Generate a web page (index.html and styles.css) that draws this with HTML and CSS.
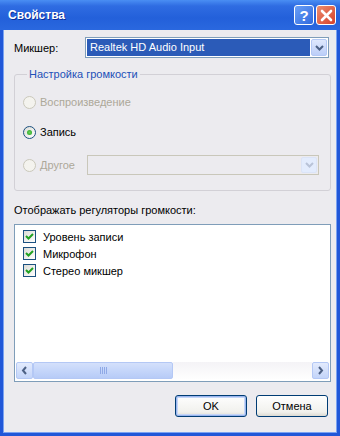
FILE: index.html
```html
<!DOCTYPE html>
<html>
<head>
    <title>Свойства</title>
    <link rel="stylesheet" href="styles.css">
</head>
<body>
    <div class="window">
        <div class="titlebar">
            <span class="title">Свойства</span>
            <span class="tbtn help">?</span>
            <span class="tbtn close">
                <svg width="13" height="13" viewBox="0 0 13 13"><path d="M2 2 L11 11 M11 2 L2 11" stroke="#fff" stroke-width="2.6" stroke-linecap="round"/></svg>
            </span>
        </div>
        <div class="content">
            <div class="mixer-row">
                <label class="mixer-label">Микшер:</label>
                <div class="combo">
                    <div class="combo-value selected">Realtek HD Audio Input</div>
                    <div class="combo-btn">
                        <svg width="9" height="6" viewBox="0 0 9 6"><path d="M1 1 L4.5 4.5 L8 1" fill="none" stroke="#4d6185" stroke-width="2"/></svg>
                    </div>
                </div>
            </div>

            <fieldset class="group">
                <legend>Настройка громкости</legend>
                <div class="radio-row disabled">
                    <span class="radio"></span>
                    <span>Воспроизведение</span>
                </div>
                <div class="radio-row checked">
                    <span class="radio"><span class="dot"></span></span>
                    <span>Запись</span>
                </div>
                <div class="radio-row disabled other">
                    <span class="radio"></span>
                    <span class="other-label">Другое</span>
                    <div class="combo combo-disabled">
                        <div class="combo-value"></div>
                        <div class="combo-btn">
                            <svg width="9" height="6" viewBox="0 0 9 6"><path d="M1 1 L4.5 4.5 L8 1" fill="none" stroke="#b9c3d8" stroke-width="2"/></svg>
                        </div>
                    </div>
                </div>
            </fieldset>

            <div class="list-label">Отображать регуляторы громкости:</div>
            <div class="listbox">
                <div class="items">
                    <div class="item"><span class="check"><svg width="9" height="9" viewBox="0 0 9 9"><path d="M1 4 L3.5 6.5 L8 2" fill="none" stroke="#21a121" stroke-width="2"/></svg></span>Уровень записи</div>
                    <div class="item"><span class="check"><svg width="9" height="9" viewBox="0 0 9 9"><path d="M1 4 L3.5 6.5 L8 2" fill="none" stroke="#21a121" stroke-width="2"/></svg></span>Микрофон</div>
                    <div class="item"><span class="check"><svg width="9" height="9" viewBox="0 0 9 9"><path d="M1 4 L3.5 6.5 L8 2" fill="none" stroke="#21a121" stroke-width="2"/></svg></span>Стерео микшер</div>
                </div>
                <div class="hscroll">
                    <span class="sbtn">
                        <svg width="7" height="9" viewBox="0 0 7 9"><path d="M5 1 L2 4.5 L5 8" fill="none" stroke="#4d6185" stroke-width="2"/></svg>
                    </span>
                    <span class="thumb"><span class="grip"></span></span>
                    <span class="track"></span>
                    <span class="sbtn">
                        <svg width="7" height="9" viewBox="0 0 7 9"><path d="M2 1 L5 4.5 L2 8" fill="none" stroke="#4d6185" stroke-width="2"/></svg>
                    </span>
                </div>
            </div>

            <div class="buttons">
                <button class="btn default">OK</button>
                <button class="btn">Отмена</button>
            </div>
        </div>
    </div>
</body>
</html>
```

FILE: styles.css
```css
body {
    margin: 0;
    padding: 0;
    font-family: 'Liberation Sans', Arial, sans-serif;
    font-size: 11px;
    color: #000;
    background: #fff;
}
.window {
    width: 340px;
    height: 436px;
    display: flex;
    flex-direction: column;
}
.titlebar {
    height: 30px;
    display: flex;
    align-items: center;
    padding: 0 4px 0 8px;
    background: linear-gradient(#4a8ef3 0%, #2f6ce2 20%, #2360da 60%, #2a68df 100%);
    box-sizing: border-box;
}
.title {
    flex: 1;
    color: #fff;
    font-weight: bold;
    font-size: 12px;
    text-shadow: 1px 1px 0 #0c2f9a;
}
.tbtn {
    width: 20px;
    height: 20px;
    box-sizing: border-box;
    border: 1px solid #fff;
    border-radius: 3px;
    display: flex;
    align-items: center;
    justify-content: center;
    color: #fff;
    font-weight: bold;
    font-size: 15px;
    margin-left: 2px;
}
.help {
    background: linear-gradient(135deg, #6a9ff6, #3069de);
}
.close {
    background: linear-gradient(135deg, #ec8e6f, #d6402a);
}
.content {
    flex: 1;
    background: #ecebef;
    border: 3px solid #2157d8;
    border-top: 0;
    box-shadow: inset 1px 0 0 #7aa2f2, inset -1px 0 0 #7aa2f2, inset 0 -1px 0 #7aa2f2;
    padding: 7px 6px 0 11px;
    display: flex;
    flex-direction: column;
}
.mixer-row {
    display: flex;
    align-items: center;
    height: 21px;
}
.mixer-label {
    width: 71px;
}
.combo {
    width: 244px;
    height: 21px;
    box-sizing: border-box;
    border: 1px solid #7f9db9;
    background: #fff;
    display: flex;
    padding: 1px;
}
.combo-value {
    flex: 1;
    line-height: 17px;
    padding-left: 3px;
}
.combo-value.selected {
    background: #2b5bb8;
    color: #fff;
    margin-right: 1px;
}
.combo-btn {
    width: 16px;
    box-sizing: border-box;
    border: 1px solid #b4c8f5;
    border-radius: 2px;
    background: linear-gradient(#dfe8fd, #bccef8);
    display: flex;
    align-items: center;
    justify-content: center;
}
.group {
    margin: 10px 0 0 0;
    padding: 13px 0 15px 8px;
    border: 1px solid #d2d0d6;
    border-radius: 3px;
    width: 317px;
    box-sizing: border-box;
}
.group legend {
    color: #2250b8;
    padding: 0 2px;
    margin-left: 4px;
    line-height: 13px;
}
.radio-row {
    display: flex;
    align-items: center;
    height: 16px;
}
.radio-row + .radio-row {
    margin-top: 14px;
}
.radio-row.other {
    height: 20px;
    margin-top: 15px;
}
.radio {
    width: 13px;
    height: 13px;
    box-sizing: border-box;
    border: 1px solid #1c5180;
    border-radius: 50%;
    background: linear-gradient(135deg, #dcdcd6, #fff);
    margin-right: 4px;
    display: flex;
    align-items: center;
    justify-content: center;
}
.disabled {
    color: #aca899;
}
.disabled .radio {
    border-color: #cac8bb;
    background: #f4f3ee;
}
.dot {
    width: 5px;
    height: 5px;
    border-radius: 50%;
    background: radial-gradient(#6ad35a, #21a121);
}
.other-label {
    width: 47px;
}
.combo-disabled {
    width: 232px;
    height: 20px;
    border-color: #c9c7ba;
    background: #ecebef;
}
.combo-disabled .combo-btn {
    border-color: #dbe4f7;
    background: #e3ecfd;
}
.list-label {
    margin-top: 13px;
    line-height: 13px;
}
.listbox {
    margin-top: 7px;
    width: 317px;
    height: 158px;
    box-sizing: border-box;
    border: 1px solid #7f9db9;
    background: #fff;
    display: flex;
    flex-direction: column;
    padding: 3px 1px 2px 1px;
}
.items {
    flex: 1;
    padding-left: 7px;
}
.item {
    display: flex;
    align-items: center;
    height: 17px;
}
.check {
    width: 13px;
    height: 13px;
    box-sizing: border-box;
    border: 1px solid #1c5180;
    background: linear-gradient(135deg, #dcdcd6, #fff);
    display: flex;
    align-items: center;
    justify-content: center;
    margin-right: 7px;
}
.hscroll {
    display: flex;
    height: 17px;
    background: #fcfcfe;
}
.sbtn {
    width: 17px;
    box-sizing: border-box;
    border: 1px solid #b4c8f5;
    border-radius: 2px;
    background: linear-gradient(#e3ebfd, #c3d4f9);
    display: flex;
    align-items: center;
    justify-content: center;
}
.thumb {
    width: 140px;
    box-sizing: border-box;
    border: 1px solid #b4c8f5;
    border-radius: 2px;
    background: linear-gradient(#d4e0fb, #c5d6fa 50%, #b7cbf7);
    display: flex;
    align-items: center;
    justify-content: center;
}
.grip {
    width: 7px;
    height: 7px;
    background: repeating-linear-gradient(90deg, #8fa9e6 0 1px, transparent 1px 2px);
}
.track {
    flex: 1;
    background: linear-gradient(#f4f3f6, #fefefe);
}
.buttons {
    display: flex;
    justify-content: flex-end;
    gap: 9px;
    margin-top: 13px;
    padding-right: 3px;
}
.btn {
    width: 72px;
    height: 22px;
    box-sizing: border-box;
    border: 1px solid #003c74;
    border-radius: 3px;
    background: linear-gradient(#fefefe, #f1f1ed 80%, #dcdad2);
    font-family: 'Liberation Sans', Arial, sans-serif;
    font-size: 11px;
    color: #000;
    padding: 0;
}
.btn.default {
    box-shadow: inset 0 0 0 1px #9ab6ee, inset 0 0 0 2px #c6d6f7;
}
```
